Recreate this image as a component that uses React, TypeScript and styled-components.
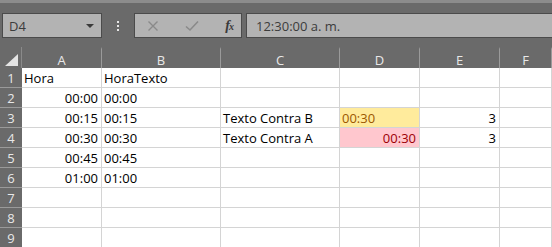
import styled, { createGlobalStyle } from 'styled-components';

const GlobalStyle = createGlobalStyle`
  html, body {
    margin: 0;
    padding: 0;
    background: #6a6a6a;
    overflow: hidden;
  }
  #root {
    width: 552px;
    height: 247px;
    overflow: hidden;
  }
`;

const Window = styled.div`
  width: 552px;
  height: 247px;
  display: flex;
  flex-direction: column;
  background: #6a6a6a;
  font-family: "Open Sans", "Noto Sans", sans-serif;
`;

const TopStrip = styled.div`
  height: 3px;
  background: #8c8c8c;
`;

const FormulaBar = styled.div`
  height: 44px;
  box-sizing: border-box;
  padding: 10px 0 9px 2px;
  display: flex;
  align-items: stretch;
`;

const NameBox = styled.div`
  width: 100px;
  box-sizing: border-box;
  background: #b3b3b3;
  border: 1px solid #4b4b4b;
  display: flex;
  align-items: center;
  justify-content: space-between;
  padding: 0 7px 0 6px;
  font-size: 13px;
  color: #3c3c3c;
`;

const Caret = styled.span`
  width: 0;
  height: 0;
  border-left: 4px solid transparent;
  border-right: 4px solid transparent;
  border-top: 4px solid #3a3a3a;
`;

const Grip = styled.div`
  width: 32px;
  display: flex;
  flex-direction: column;
  align-items: center;
  justify-content: center;
  gap: 2px;
  span {
    width: 2px;
    height: 2px;
    background: #e6e6e6;
  }
`;

const ButtonGroup = styled.div`
  width: 108px;
  box-sizing: border-box;
  background: #b3b3b3;
  border: 1px solid #4b4b4b;
  display: flex;
  align-items: center;
  padding: 0 8px 0 12px;
  justify-content: space-between;
`;

const FxLabel = styled.span`
  font-family: "Liberation Serif", serif;
  font-style: italic;
  font-weight: bold;
  font-size: 14px;
  color: #3a3a3a;
  letter-spacing: -1px;
  sub {
    font-size: 10px;
    vertical-align: baseline;
  }
`;

const FormulaInput = styled.div`
  flex: 1;
  margin-left: 4px;
  box-sizing: border-box;
  background: #b3b3b3;
  border: 1px solid #4b4b4b;
  border-right: none;
  display: flex;
  align-items: center;
  padding-left: 9px;
  font-size: 13px;
  color: #3c3c3c;
`;

const Sheet = styled.div`
  flex: 1;
  display: grid;
  grid-template-columns: 22px 80px 119px 119px 80px 80px 1fr;
  grid-template-rows: 21px repeat(9, 20px);
  background: #ffffff;
  overflow: hidden;
`;

const Corner = styled.div`
  background: #6a6a6a;
  position: relative;
  border-right: 1px solid #8a8a8a;
  &::after {
    content: '';
    position: absolute;
    right: 3px;
    bottom: 2px;
    width: 0;
    height: 0;
    border-left: 13px solid transparent;
    border-bottom: 12px solid #e4e4e4;
  }
`;

const ColHead = styled.div`
  background: #6a6a6a;
  color: #e8e8e8;
  font-size: 13px;
  display: flex;
  align-items: center;
  justify-content: center;
  box-sizing: border-box;
  padding-top: 2px;
  border-right: 1px solid #9a9a9a;
  border-top: 2px solid #6a6a6a;
  background-clip: border-box;
`;

const RowHead = styled.div`
  background: #6a6a6a;
  color: #e8e8e8;
  font-size: 13px;
  display: flex;
  align-items: center;
  justify-content: center;
  box-sizing: border-box;
  border-bottom: 1px solid #9a9a9a;
`;

const Cell = styled.div<{ $align?: 'left' | 'right'; $tone?: 'neutral' | 'bad' }>`
  box-sizing: border-box;
  border-right: 1px solid #d4d4d4;
  border-bottom: 1px solid #d4d4d4;
  font-size: 13px;
  color: #000;
  display: flex;
  align-items: center;
  justify-content: ${p => (p.$align === 'right' ? 'flex-end' : 'flex-start')};
  padding: 1px 3px 0 2px;
  white-space: nowrap;
  overflow: visible;
  ${p => p.$tone === 'neutral' && 'background: #ffeb9c; color: #9c5700;'}
  ${p => p.$tone === 'bad' && 'background: #ffc7ce; color: #9c0006;'}
`;

type CellData = { v?: string; align?: 'left' | 'right'; tone?: 'neutral' | 'bad' };

const cols = ['A', 'B', 'C', 'D', 'E', 'F'];

const rows: CellData[][] = [
  [{ v: 'Hora' }, { v: 'HoraTexto' }, {}, {}, {}, {}],
  [{ v: '00:00', align: 'right' }, { v: '00:00' }, {}, {}, {}, {}],
  [{ v: '00:15', align: 'right' }, { v: '00:15' }, { v: 'Texto Contra B' }, { v: '00:30', tone: 'neutral' }, { v: '3', align: 'right' }, {}],
  [{ v: '00:30', align: 'right' }, { v: '00:30' }, { v: 'Texto Contra A' }, { v: '00:30', align: 'right', tone: 'bad' }, { v: '3', align: 'right' }, {}],
  [{ v: '00:45', align: 'right' }, { v: '00:45' }, {}, {}, {}, {}],
  [{ v: '01:00', align: 'right' }, { v: '01:00' }, {}, {}, {}, {}],
  [{}, {}, {}, {}, {}, {}],
  [{}, {}, {}, {}, {}, {}],
  [{}, {}, {}, {}, {}, {}],
];

const CancelIcon = () => (
  <svg width="12" height="12" viewBox="0 0 12 12">
    <path d="M1.5 1.5 L10.5 10.5 M10.5 1.5 L1.5 10.5" stroke="#8a8a8a" strokeWidth="1.4" fill="none" />
  </svg>
);

const EnterIcon = () => (
  <svg width="14" height="12" viewBox="0 0 14 12">
    <path d="M1 6.5 L5 10 L13 1.5" stroke="#8a8a8a" strokeWidth="1.6" fill="none" />
  </svg>
);

export default function App() {
  return (
    <>
      <GlobalStyle />
      <Window>
        <TopStrip />
        <FormulaBar>
          <NameBox>
            D4
            <Caret />
          </NameBox>
          <Grip>
            <span />
            <span />
            <span />
          </Grip>
          <ButtonGroup>
            <CancelIcon />
            <EnterIcon />
            <FxLabel>f<sub>x</sub></FxLabel>
          </ButtonGroup>
          <FormulaInput>12:30:00 a. m.</FormulaInput>
        </FormulaBar>
        <Sheet>
          <Corner />
          {cols.map(c => (
            <ColHead key={c}>{c}</ColHead>
          ))}
          {rows.map((row, r) => [
            <RowHead key={`h${r}`}>{r + 1}</RowHead>,
            ...row.map((cell, c) => (
              <Cell key={`${r}-${c}`} $align={cell.align} $tone={cell.tone}>
                {cell.v}
              </Cell>
            )),
          ])}
        </Sheet>
      </Window>
    </>
  );
}
